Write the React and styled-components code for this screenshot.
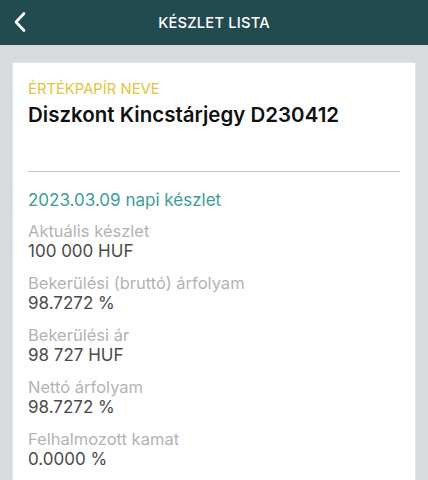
import React from "react";
import styled, { createGlobalStyle } from "styled-components";

const GlobalStyle = createGlobalStyle`
  body {
    margin: 0;
    background: #d8dbde;
    font-family: Inter, "Liberation Sans", sans-serif;
  }
`;

const Page = styled.div`
  width: 428px;
  height: 480px;
  overflow: hidden;
  background: #d8dbde;
`;

const Header = styled.header`
  position: relative;
  height: 45px;
  background: #224b4f;
  display: flex;
  align-items: center;
  justify-content: center;
`;

const BackButton = styled.button`
  position: absolute;
  left: 10px;
  top: 9px;
  width: 20px;
  height: 26px;
  padding: 0;
  border: none;
  background: none;
  display: flex;
  align-items: center;
  justify-content: center;
`;

const Title = styled.h1`
  margin: 0;
  font-size: 14.7px;
  font-weight: 500;
  color: #ffffff;
  letter-spacing: 0.2px;
`;

const Content = styled.main`
  padding: 17px 12px 0;
`;

const Card = styled.section`
  background: #ffffff;
  border: 1px solid #e3e4e6;
  padding: 16px 15px 20px;
  min-height: 440px;
`;

const Caption = styled.div`
  font-size: 14.8px;
  line-height: 20px;
  color: #e2c43c;
`;

const PaperName = styled.div`
  margin-top: 2px;
  font-size: 20.5px;
  line-height: 27px;
  font-weight: 600;
  color: #111111;
`;

const Divider = styled.hr`
  margin: 43px 0 0;
  border: none;
  border-top: 1px solid #c4c4c4;
`;

const DateLine = styled.div`
  margin-top: 17px;
  font-size: 17px;
  line-height: 22px;
  color: #3a9e96;
`;

const Rows = styled.dl`
  margin: 10px 0 0;
  display: flex;
  flex-direction: column;
  gap: 12px;
`;

const Row = styled.div`
  display: flex;
  flex-direction: column;
`;

const Label = styled.dt`
  font-size: 16.5px;
  line-height: 20px;
  color: #b3b3b3;
`;

const Value = styled.dd`
  margin: 0;
  font-size: 17px;
  line-height: 20px;
  color: #4a4a4a;
`;

const rows = [
  { label: "Aktuális készlet", value: "100 000 HUF" },
  { label: "Bekerülési (bruttó) árfolyam", value: "98.7272 %" },
  { label: "Bekerülési ár", value: "98 727 HUF" },
  { label: "Nettó árfolyam", value: "98.7272 %" },
  { label: "Felhalmozott kamat", value: "0.0000 %" },
];

function App() {
  return (
    <Page>
      <GlobalStyle />
      <Header>
        <BackButton aria-label="Vissza">
          <svg width="12" height="20" viewBox="0 0 12 20">
            <path
              d="M10 1.5 L2 10 L10 18.5"
              fill="none"
              stroke="#ffffff"
              strokeWidth="2.6"
              strokeLinecap="round"
              strokeLinejoin="round"
            />
          </svg>
        </BackButton>
        <Title>KÉSZLET LISTA</Title>
      </Header>
      <Content>
        <Card>
          <Caption>ÉRTÉKPAPÍR NEVE</Caption>
          <PaperName>Diszkont Kincstárjegy D230412</PaperName>
          <Divider />
          <DateLine>2023.03.09 napi készlet</DateLine>
          <Rows>
            {rows.map((row) => (
              <Row key={row.label}>
                <Label>{row.label}</Label>
                <Value>{row.value}</Value>
              </Row>
            ))}
          </Rows>
        </Card>
      </Content>
    </Page>
  );
}

export default App;
